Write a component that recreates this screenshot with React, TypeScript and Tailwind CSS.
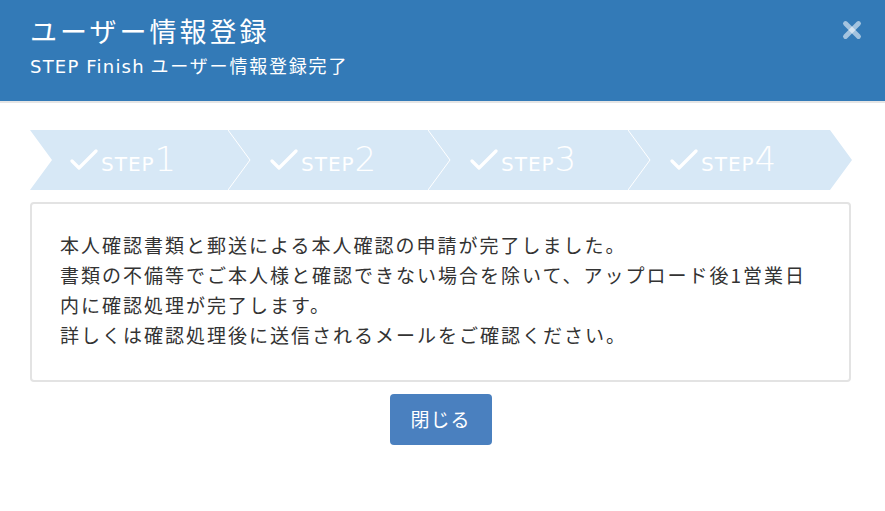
import { X } from "lucide-react";

const jp = { fontFamily: '"DejaVu Sans", "Noto Sans CJK JP", sans-serif' };
const cjk = { fontFamily: '"Noto Sans CJK JP", sans-serif' };

const Check = () => (
  <svg width="28" height="22" viewBox="0 0 28 22" className="mr-[3px] mt-[4px]">
    <path d="M2 12 L9 19 L26 2" fill="none" stroke="white" strokeWidth="3.2" strokeLinecap="round" strokeLinejoin="round" />
  </svg>
);

const Chevron = ({ left }: { left: number }) => (
  <svg
    width="24"
    height="60"
    viewBox="0 0 24 60"
    className="absolute top-0"
    style={{ left }}
  >
    <path d="M0 0 L22 30 L0 60" fill="none" stroke="white" strokeWidth="1" />
  </svg>
);

const StepBar = () => (
  <div className="relative h-[60px] w-[822px]">
    <div
      className="absolute inset-0 bg-[#d7e8f6]"
      style={{ clipPath: "polygon(0 0, 800px 0, 822px 30px, 800px 60px, 0 60px, 22px 30px)" }}
    />
    <Chevron left={198} />
    <Chevron left={398} />
    <Chevron left={598} />
    <div className="relative flex h-full">
      {[1, 2, 3, 4].map((n) => (
        <div key={n} className="flex w-[200px] items-baseline pl-[40px] pt-[12px] text-white" style={{ fontFamily: '"DejaVu Sans", sans-serif' }}>
          <Check />
          <span className="text-[20px] tracking-[1px] leading-none">STEP</span>
          <span className="text-[34px] font-extralight leading-none">{n}</span>
        </div>
      ))}
    </div>
  </div>
);

export default function App() {
  return (
    <div className="w-[885px] h-[511px] bg-white" style={jp}>
      <header className="h-[103px] bg-[#337ab7] border-b-2 border-[#e5e5e5] flex justify-between px-[30px] pt-[14px]">
        <div className="text-white">
          <h1 className="text-[27px] tracking-[3px] leading-[34px]" style={cjk}>ユーザー情報登録</h1>
          <p className="text-[18px] leading-[24px] mt-[5px]">
            <span className="tracking-[1.2px]">STEP Finish</span>{" "}
            <span className="tracking-[1.8px]" style={cjk}>ユーザー情報登録完了</span>
          </p>
        </div>
        <button className="text-white/55 -mr-[10px] mt-[2px] h-[28px]">
          <X size={26} strokeWidth={4.5} />
        </button>
      </header>

      <main className="px-[30px] pt-[27px] flex flex-col items-start">
        <StepBar />
        <div className="mt-[12px] w-[821px] border-2 border-[#e3e3e3] rounded-[4px] px-[28px] pt-[26px] pb-[30px] text-[19px] tracking-[2px] leading-[30px] text-[#333]" style={cjk}>
          <p>本人確認書類と郵送による本人確認の申請が完了しました。</p>
          <p>書類の不備等でご本人様と確認できない場合を除いて、アップロード後1営業日内に確認処理が完了します。</p>
          <p>詳しくは確認処理後に送信されるメールをご確認ください。</p>
        </div>
        <div className="w-[821px] flex justify-center mt-[12px]">
          <button className="w-[102px] h-[51px] bg-[#4a80bf] rounded-[4px] text-white text-[19px] tracking-[1px]" style={cjk}>閉じる</button>
        </div>
      </main>
    </div>
  );
}
